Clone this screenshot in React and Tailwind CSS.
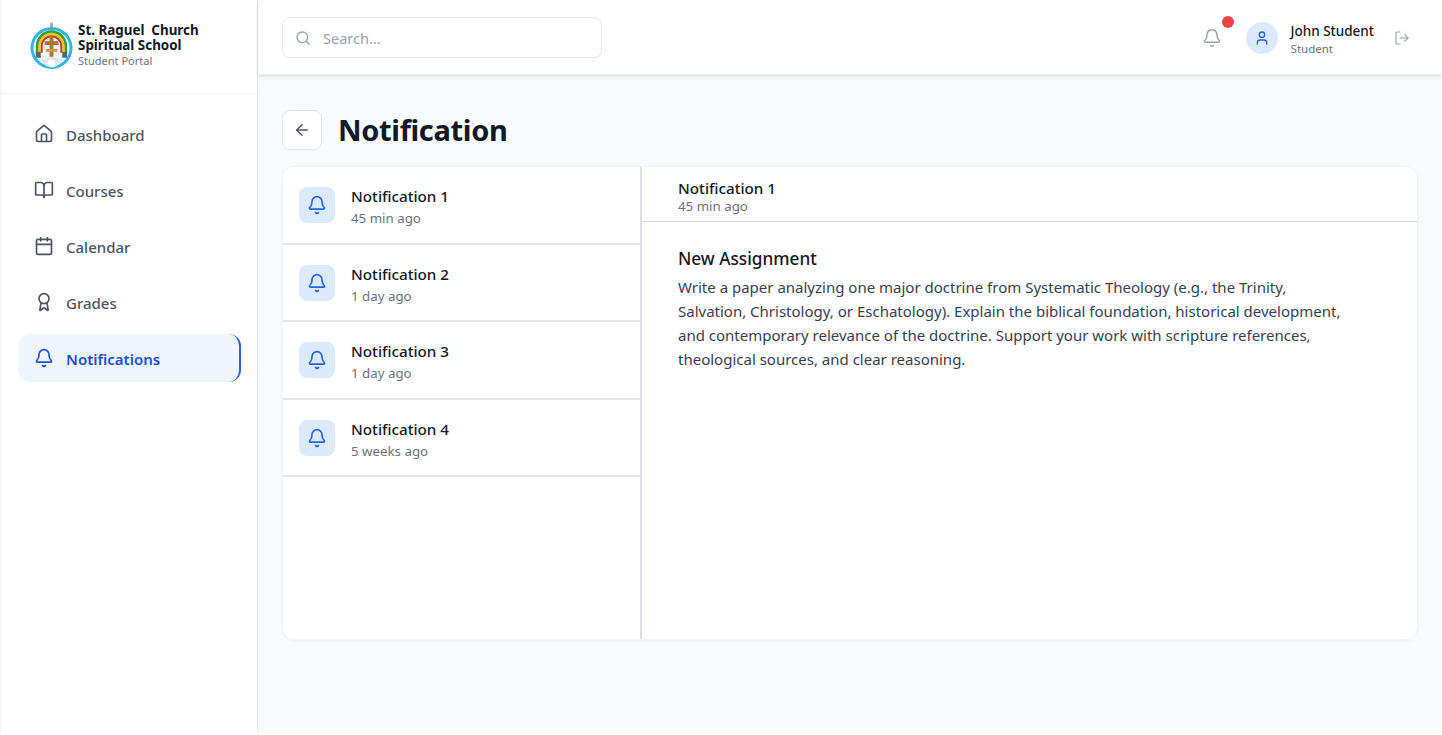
import React from "react";
import { Home, BookOpen, Calendar, Award, Bell, Search, ArrowLeft, User, LogOut } from "lucide-react";

const navItems = [
  { label: "Dashboard", icon: Home },
  { label: "Courses", icon: BookOpen },
  { label: "Calendar", icon: Calendar },
  { label: "Grades", icon: Award },
  { label: "Notifications", icon: Bell, active: true },
];

const notifications = [
  { title: "Notification 1", time: "45 min ago" },
  { title: "Notification 2", time: "1 day ago" },
  { title: "Notification 3", time: "1 day ago" },
  { title: "Notification 4", time: "5 weeks ago" },
];

function Logo() {
  return (
    <svg width="43" height="48" viewBox="0 0 44 48" className="shrink-0">
      <rect x="20.5" y="0" width="3" height="6" fill="#a8adb3" />
      <circle cx="22" cy="26" r="21.5" fill="#2bb8dc" />
      <circle cx="22" cy="26" r="18.5" fill="#eef8fb" />
      <path d="M6 31 V24 A16 16 0 0 1 38 24 V31 H35 V24 A13 13 0 0 0 9 24 V31 Z" fill="#2f9e44" />
      <path d="M8.5 31 V24 A13.5 13.5 0 0 1 35.5 24 V31 H33 V24 A11 11 0 0 0 11 24 V31 Z" fill="#f2c811" />
      <path d="M11 31 V24 A11 11 0 0 1 33 24 V31 H31 V24 A9 9 0 0 0 13 24 V31 Z" fill="#d9342b" />
      <rect x="6" y="30" width="5" height="6" fill="#59626e" />
      <rect x="33" y="30" width="5" height="6" fill="#59626e" />
      <rect x="20" y="14" width="4" height="21" fill="#a9772f" />
      <rect x="15" y="19" width="14" height="4" fill="#a9772f" />
      <rect x="16" y="27" width="12" height="3" fill="#c99a4e" />
      <path d="M22 35 L11 38 L17 45 H27 L33 38 Z" fill="#dfe5e8" />
      <circle cx="22" cy="42" r="4" fill="#ffffff" />
    </svg>
  );
}

function Sidebar() {
  return (
    <aside className="w-[258px] shrink-0 bg-white border-r border-gray-200 border-l border-l-gray-100 flex flex-col">
      <div className="h-[94px] border-b border-gray-100 flex items-start pt-[22px] pl-[29px] gap-[5px]">
        <Logo />
        <div className="pt-[1px]">
          <div className="text-[13.4px] leading-[15px] font-bold text-[#111827] whitespace-pre">St. Raguel  Church</div>
          <div className="text-[13.4px] leading-[15px] font-bold text-[#111827]">Spiritual School</div>
          <div className="text-[11px] leading-[16px] text-gray-500">Student Portal</div>
        </div>
      </div>
      <nav className="pt-[16px] px-[17px] flex flex-col gap-[8px]">
        {navItems.map((item) => {
          const Icon = item.icon;
          return (
            <div
              key={item.label}
              className={
                item.active
                  ? "h-[48px] w-[223px] flex items-center gap-[12px] pl-[16px] rounded-xl bg-[#eff6ff] border-r-2 border-[#2563eb] text-[#1d4ed8] font-semibold"
                  : "h-[48px] w-[223px] flex items-center gap-[12px] pl-[16px] rounded-xl text-[#4b5563] font-medium"
              }
            >
              <Icon size={20} strokeWidth={2} />
              <span className="text-[15px] leading-[22px] pt-[1px]">{item.label}</span>
            </div>
          );
        })}
      </nav>
    </aside>
  );
}

function Header() {
  return (
    <header className="h-[75px] shrink-0 bg-white border-b border-gray-100 shadow-sm flex items-center justify-between pt-[1px] pl-[24px] pr-[32px]">
      <div className="w-[320px] h-[41px] border border-gray-200 rounded-lg flex items-center gap-[12px] pl-[12px] text-gray-400">
        <Search size={16} strokeWidth={2} className="text-gray-400" />
        <span className="text-[14.5px] leading-[22px] pt-[1px]">Search...</span>
      </div>
      <div className="flex items-center">
        <div className="relative mr-[24px]">
          <Bell size={20} strokeWidth={1.75} className="text-gray-400" />
          <span className="absolute -top-[12px] left-[20px] w-[12px] h-[12px] rounded-full bg-[#ef4444]" />
        </div>
        <div className="w-[32px] h-[32px] rounded-full bg-[#dbeafe] flex items-center justify-center mr-[13px]">
          <User size={16} strokeWidth={2} className="text-[#2563eb]" />
        </div>
        <div className="mr-[20px] pt-[3px]">
          <div className="text-[13.5px] leading-[18px] font-medium text-[#111827]">John Student</div>
          <div className="text-[11.5px] leading-[17px] text-gray-500">Student</div>
        </div>
        <LogOut size={16} strokeWidth={1.75} className="text-gray-400" />
      </div>
    </header>
  );
}

function NotificationList() {
  return (
    <div className="w-[359px] shrink-0 border-r-2 border-[#dcdee3]">
      {notifications.map((n) => (
        <div key={n.title} className="h-[77.5px] border-b-2 border-gray-200 flex items-center gap-[16px] pl-[16px] pt-[1px]">
          <div className="w-[36px] h-[36px] rounded-lg bg-[#dbeafe] flex items-center justify-center">
            <Bell size={20} strokeWidth={2} className="text-[#2563eb]" />
          </div>
          <div className="pt-[4px]">
            <div className="text-[15.2px] leading-[22px] font-medium text-[#111827]">{n.title}</div>
            <div className="text-[13.3px] leading-[22px] text-gray-500">{n.time}</div>
          </div>
        </div>
      ))}
    </div>
  );
}

function NotificationDetail() {
  return (
    <div className="flex-1">
      <div className="h-[55px] border-b border-gray-300 pl-[36px] pt-[11px]">
        <div className="text-[15.2px] leading-[20px] font-medium text-[#111827]">Notification 1</div>
        <div className="text-[13.3px] leading-[17px] text-gray-500">45 min ago</div>
      </div>
      <div className="pl-[36px] pt-[24px] w-[708px]">
        <h3 className="text-[17.2px] leading-[26px] font-medium text-[#111827]">New Assignment</h3>
        <p className="text-[15px] leading-[24px] text-[#374151] mt-[3px]">
          Write a paper analyzing one major doctrine from Systematic Theology (e.g., the Trinity, Salvation, Christology, or Eschatology). Explain the biblical foundation, historical development, and contemporary relevance of the doctrine. Support your work with scripture references, theological sources, and clear reasoning.
        </p>
      </div>
    </div>
  );
}

export default function App() {
  return (
    <div className="h-[733px] w-[1442px] flex bg-[#f9fafc] overflow-hidden font-['Noto_Sans',sans-serif]">
      <Sidebar />
      <div className="flex-1 flex flex-col">
        <Header />
        <main className="px-[24px] pt-[34px]">
          <div className="flex items-center gap-[16px] h-[41px]">
            <button className="w-[40px] h-[40px] bg-white border border-gray-200 rounded-lg flex items-center justify-center text-gray-600">
              <ArrowLeft size={18} strokeWidth={2} />
            </button>
            <h1 className="text-[29px] tracking-[-0.33px] font-bold text-[#111827] leading-[41px]">Notification</h1>
          </div>
          <div className="mt-[16px] w-[1136px] h-[474px] bg-white border border-gray-100 rounded-xl shadow-[0_1px_3px_rgba(0,0,0,0.04)] flex overflow-hidden">
            <NotificationList />
            <NotificationDetail />
          </div>
        </main>
      </div>
    </div>
  );
}
